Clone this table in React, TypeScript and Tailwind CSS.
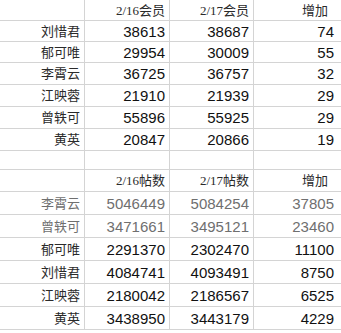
const members = [
  ["刘惜君", "38613", "38687", "74"],
  ["郁可唯", "29954", "30009", "55"],
  ["李霄云", "36725", "36757", "32"],
  ["江映蓉", "21910", "21939", "29"],
  ["曾轶可", "55896", "55925", "29"],
  ["黄英", "20847", "20866", "19"],
];

const posts = [
  ["李霄云", "5046449", "5084254", "37805", true],
  ["曾轶可", "3471661", "3495121", "23460", true],
  ["郁可唯", "2291370", "2302470", "11100", false],
  ["刘惜君", "4084741", "4093491", "8750", false],
  ["江映蓉", "2180042", "2186567", "6525", false],
  ["黄英", "3438950", "3443179", "4229", false],
] as const;

const cjk = { fontFamily: '"Liberation Serif", "Noto Sans CJK SC", serif' };
const num = { fontFamily: '"Liberation Sans", Arial, sans-serif' };

function Cell({ children, last, kind, faded, h }: { children?: React.ReactNode; last?: boolean; kind: "name" | "num" | "head"; faded?: boolean; h: string }) {
  const color = faded ? "text-[#6f6f6f]" : kind === "num" ? "text-[#111]" : "text-[#2a2a2a]";
  const size = kind === "num" ? "text-[15px]" : "text-[13px]";
  return (
    <div
      className={`flex items-center justify-end border-b border-[#d4d4d4] ${last ? "pr-[7px]" : "border-r pr-[4px]"} ${h} ${color} ${size} leading-none`}
      style={kind === "num" ? num : cjk}
    >
      {children}
    </div>
  );
}

export default function App() {
  const rowH1 = ["h-[21px]", "h-[21px]", "h-[22px]", "h-[22px]", "h-[22px]", "h-[22px]"];
  return (
    <div className="h-[333px] w-[341px] overflow-hidden bg-white">
      <div className="grid grid-cols-[85px_85px_84px_87px]">
        <Cell kind="head" h="h-[21px]" />
        <Cell kind="head" h="h-[21px]">2/16会员</Cell>
        <Cell kind="head" h="h-[21px]">2/17会员</Cell>
        <Cell kind="head" h="h-[21px]" last>
          <span className="pr-[6px]">增加</span>
        </Cell>
        {members.map((r, i) => (
          <Row key={r[0]} cells={r} h={rowH1[i]} />
        ))}
        <Cell kind="head" h="h-[19px]" />
        <Cell kind="head" h="h-[19px]" />
        <Cell kind="head" h="h-[19px]" />
        <Cell kind="head" h="h-[19px]" last />
        <Cell kind="head" h="h-[22px]" />
        <Cell kind="head" h="h-[22px]">2/16帖数</Cell>
        <Cell kind="head" h="h-[22px]">2/17帖数</Cell>
        <Cell kind="head" h="h-[22px]" last>
          <span className="pr-[6px]">增加</span>
        </Cell>
        {posts.map((r) => (
          <Row key={r[0]} cells={[r[0], r[1], r[2], r[3]]} h="h-[23px]" faded={r[4]} />
        ))}
      </div>
    </div>
  );
}

function Row({ cells, h, faded }: { cells: string[]; h: string; faded?: boolean }) {
  return (
    <>
      <Cell kind="name" h={h} faded={faded}>{cells[0]}</Cell>
      <Cell kind="num" h={h} faded={faded}>{cells[1]}</Cell>
      <Cell kind="num" h={h} faded={faded}>{cells[2]}</Cell>
      <Cell kind="num" h={h} faded={faded} last>{cells[3]}</Cell>
    </>
  );
}
